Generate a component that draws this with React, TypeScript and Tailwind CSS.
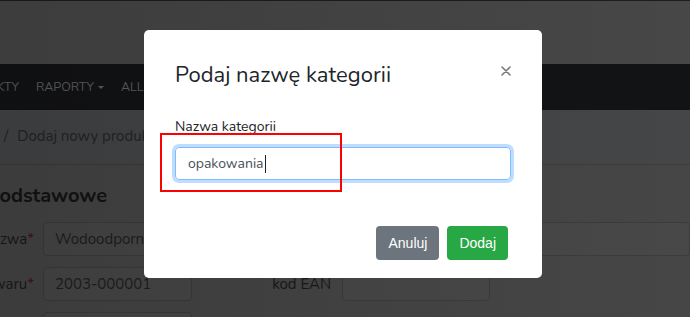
const nunito = "font-['Nunito','Noto_Sans',sans-serif]";

function CloseIcon() {
  return (
    <svg width="10" height="10" viewBox="0 0 10 10" fill="none" stroke="currentColor" strokeWidth="1.6" strokeLinecap="round">
      <path d="M1 1l8 8M9 1l-8 8" />
    </svg>
  );
}

function PageBehind() {
  return (
    <div className={`flex flex-col ${nunito}`}>
      <div className="h-px bg-[#1d1d1d]" />
      <div className="h-[63px] bg-[#474747]" />
      <nav className="h-[46px] bg-[#121315] flex items-center gap-[17px] text-[12.5px] text-[#5e6062] uppercase">
        <div className="w-[19px] flex justify-end whitespace-nowrap">Produkty</div>
        <div className="flex items-center gap-[4px]">
          Raporty
          <span className="border-x-[3px] border-t-[3px] border-x-transparent border-t-[#5e6062] mt-px" />
        </div>
        <div>Allegro</div>
      </nav>
      <div className="h-[55px] bg-[#454647] border-b border-[#3b3c3d] flex items-center gap-[9px] pl-[4px] text-[15px] text-[#232527] pb-[2px]">
        <span>/</span>
        <span>Dodaj nowy produkt</span>
      </div>
      <div className="bg-[#464646] flex flex-col pt-[18px]">
        <div className="w-[107px] flex justify-end whitespace-nowrap text-[20px] font-bold text-[#121314] leading-[26px]">
          Dane podstawowe
        </div>
        <div className="flex flex-col gap-[11px] mt-[13px] text-[15px] text-[#17191b]">
          <div className="flex items-center gap-[9px]">
            <div className="w-[34px] flex justify-end whitespace-nowrap">
              Nazwa<span className="text-[#4a1116]">*</span>
            </div>
            <div className="flex-1 h-[34px] border border-[#3b3c3d] rounded-[4px] bg-[#484848] flex items-center pl-[11px] text-[#1d1f21] whitespace-nowrap">
              Wodoodporne etui na telefon
            </div>
          </div>
          <div className="flex items-center">
            <div className="w-[34px] flex justify-end whitespace-nowrap">
              Kod towaru<span className="text-[#4a1116]">*</span>
            </div>
            <div className="ml-[9px] w-[149px] h-[34px] border border-[#3b3c3d] rounded-[4px] bg-[#484848] flex items-center pl-[11px] text-[#1d1f21]">
              2003-000001
            </div>
            <div className="ml-[9px] w-[130px] flex justify-end whitespace-nowrap">kod EAN</div>
            <div className="ml-[11px] w-[148px] h-[34px] border border-[#3b3c3d] rounded-[4px] bg-[#484848]" />
          </div>
          <div className="flex items-center">
            <div className="w-[34px]" />
            <div className="ml-[9px] w-[149px] h-[34px] border border-[#3b3c3d] rounded-[4px] bg-[#484848]" />
          </div>
        </div>
      </div>
    </div>
  );
}

function CategoryModal() {
  return (
    <div className={`absolute left-[144px] top-[30px] w-[398px] h-[248px] bg-white rounded-[5px] flex flex-col ${nunito}`}>
      <div className="flex items-start justify-between pl-[31px] pr-[31px] pt-[29px]">
        <h5 className="text-[22px] leading-[33px] text-[#212529]">Podaj nazwę kategorii</h5>
        <button className="mt-[7px] text-[#7a7a7a]">
          <CloseIcon />
        </button>
      </div>
      <div className="flex flex-col px-[31px] pt-[24px]">
        <label className="text-[14px] leading-[21px] text-[#212529]">Nazwa kategorii</label>
        <div className="mt-[10px] h-[33px] border border-[#80bdff] rounded-[4px] ring-[3px] ring-[#007bff]/25 flex items-center pl-[12px] text-[14px] text-[#495057]">
          opakowania
          <span className="w-px h-[18px] bg-[#222] ml-px" />
        </div>
      </div>
      <div className="flex justify-end gap-2 pr-[34px] mt-[46px] font-['Liberation_Sans',Arial,sans-serif] text-[14px] text-white">
        <button className="h-[34px] px-3 rounded-[4px] bg-[#6c757d]">Anuluj</button>
        <button className="h-[34px] px-3 rounded-[4px] bg-[#28a745]">Dodaj</button>
      </div>
    </div>
  );
}

export default function App() {
  return (
    <div className="relative w-[690px] h-[317px] overflow-hidden bg-[#464646]">
      <PageBehind />
      <div className="absolute inset-0 bg-gradient-to-r from-black/15 to-transparent pointer-events-none" />
      <CategoryModal />
      <div className="absolute left-[160px] top-[133px] w-[182px] h-[59px] border-2 border-[#ff0000]" />
    </div>
  );
}
